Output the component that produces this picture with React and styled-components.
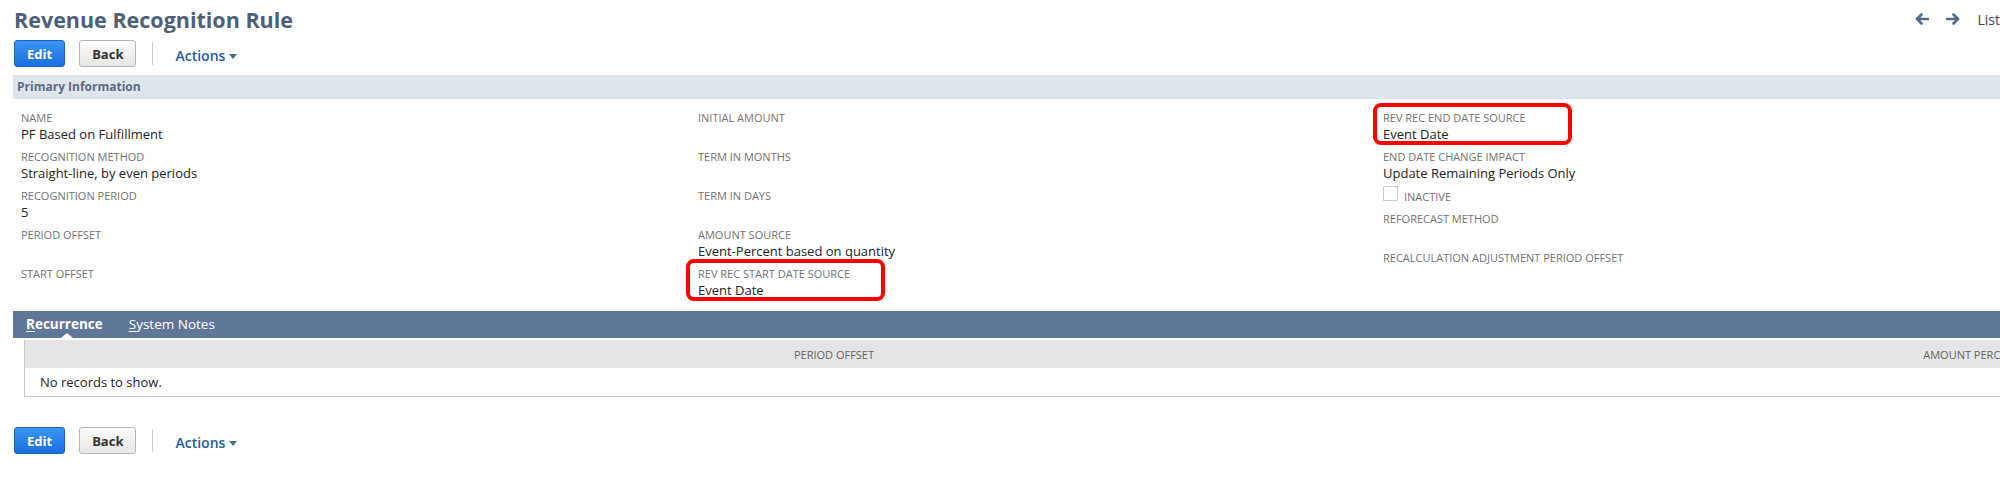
import React from "react";
import styled, { createGlobalStyle } from "styled-components";

const GlobalStyle = createGlobalStyle`
  html, body {
    margin: 0;
    padding: 0;
    background: #fff;
    overflow: hidden;
  }
  body {
    font-family: "Open Sans", "Liberation Sans", sans-serif;
    color: #262626;
  }
`;

const Page = styled.div`
  width: 2000px;
  padding-left: 13px;
  box-sizing: border-box;
`;

const Header = styled.div`
  display: flex;
  align-items: center;
  justify-content: space-between;
  height: 30px;
  padding-top: 5px;
`;

const Title = styled.h1`
  margin: 0 0 0 1px;
  font-size: 21.5px;
  line-height: 30px;
  font-weight: 700;
  color: #4d5f79;
`;

const RecordNav = styled.div`
  display: flex;
  align-items: center;
  gap: 17px;
  margin-top: -2px;
`;

const NavLink = styled.span`
  font-size: 14px;
  color: #444;
`;

const ButtonBar = styled.div`
  display: flex;
  align-items: center;
  margin-top: ${(p) => p.$top || 0}px;
  padding-left: 1px;
`;

const Button = styled.button`
  height: 27px;
  padding: 0 12px;
  margin-right: ${(p) => (p.$primary ? 14 : 16)}px;
  border-radius: 3px;
  font-family: "Open Sans", "Liberation Sans", sans-serif;
  font-size: 13px;
  font-weight: 700;
  cursor: pointer;
  border: 1px solid ${(p) => (p.$primary ? "#1c63c9" : "#b5b5b5")};
  color: ${(p) => (p.$primary ? "#fff" : "#333")};
  background: ${(p) =>
    p.$primary
      ? "linear-gradient(#3a95f2, #1a6fe0)"
      : "linear-gradient(#fbfbfb, #e6e6e6)"};
`;

const Divider = styled.div`
  width: 1px;
  height: 23px;
  background: #cfcfcf;
  margin-right: 22px;
`;

const ActionsLink = styled.span`
  display: flex;
  align-items: center;
  gap: 4px;
  font-size: 14px;
  font-weight: 600;
  color: #255a9e;
  margin-top: 4px;
`;

const Caret = styled.span`
  width: 0;
  height: 0;
  border-left: 4px solid transparent;
  border-right: 4px solid transparent;
  border-top: 5px solid #4d6a8f;
  margin-top: 1px;
`;

const SectionBar = styled.div`
  height: 24px;
  line-height: 24px;
  margin-top: 8px;
  padding-left: 4px;
  background: #dfe5ed;
  font-size: 12px;
  font-weight: 700;
  color: #5b6b83;
`;

const FieldGrid = styled.div`
  display: grid;
  grid-template-columns: 677px 685px 1fr;
  padding: 11px 0 0 8px;
`;

const Column = styled.div`
  display: flex;
  flex-direction: column;
`;

const Field = styled.div`
  position: relative;
  margin-bottom: ${(p) => (p.$compact ? 1 : 6)}px;
`;

const Label = styled.div`
  font-size: 11px;
  line-height: 15px;
  color: #727272;
  text-transform: uppercase;
`;

const Value = styled.div`
  font-size: 13px;
  line-height: 18px;
  color: #222;
`;

const Highlight = styled.div`
  position: absolute;
  left: ${(p) => p.$left}px;
  top: -7px;
  width: 199px;
  height: 42px;
  box-sizing: border-box;
  border: 4px solid #f00;
  border-radius: 8px;
  pointer-events: none;
`;

const CheckRow = styled.div`
  display: flex;
  align-items: flex-end;
  gap: 6px;
  height: 17px;
  margin: 1px 0 10px;
`;

const CheckBox = styled.span`
  width: 15px;
  height: 15px;
  box-sizing: border-box;
  border: 1px solid #cccccc;
  background: #fff;
`;

const CheckLabel = styled(Label)`
  margin-bottom: -3px;
`;

const TabBar = styled.div`
  display: flex;
  align-items: center;
  gap: 26px;
  height: 27px;
  margin-top: 6px;
  padding-left: 13px;
  background: #607799;
`;

const Tab = styled.span`
  position: relative;
  font-size: 13.5px;
  line-height: 27px;
  color: #fff;
  font-weight: ${(p) => (p.$active ? 700 : 400)};

  u {
    text-decoration: underline;
    text-underline-offset: 2px;
  }
`;

const TabPointer = styled.span`
  position: absolute;
  left: 35px;
  bottom: 0;
  width: 0;
  height: 0;
  border-left: 6px solid transparent;
  border-right: 6px solid transparent;
  border-bottom: 5px solid #fff;
`;

const RecordTable = styled.table`
  width: 2276px;
  margin: 2px 0 0 11px;
  border-collapse: collapse;
  border: 1px solid #c8c8c8;
  border-top: none;
  table-layout: fixed;
`;

const HeadCell = styled.th`
  height: 28px;
  padding: 0;
  background: #e5e5e5;
  font-size: 11px;
  font-weight: 400;
  color: #666;
  text-align: center;
  width: ${(p) => p.$width}px;
`;

const BodyCell = styled.td`
  height: 28px;
  padding: 0 0 0 15px;
  font-size: 13px;
  color: #222;
`;

const ArrowIcon = ({ flip }) => (
  <svg
    width="14"
    height="12"
    viewBox="0 0 14 12"
    style={{ transform: flip ? "scaleX(-1)" : "none" }}
  >
    <path
      d="M13 6H2.5M6.5 1.5L2 6l4.5 4.5"
      fill="none"
      stroke="#4f6b90"
      strokeWidth="2.6"
      strokeLinejoin="round"
      strokeLinecap="round"
    />
  </svg>
);

const Actions = ({ top }) => (
  <ButtonBar $top={top}>
    <Button $primary>Edit</Button>
    <Button>Back</Button>
    <Divider />
    <ActionsLink>
      Actions <Caret />
    </ActionsLink>
  </ButtonBar>
);

const Info = ({ label, value, compact, mark }) => (
  <Field $compact={compact}>
    {mark !== undefined && <Highlight $left={mark} />}
    <Label>{label}</Label>
    <Value>{value || "\u00a0"}</Value>
  </Field>
);

export default function App() {
  return (
    <Page>
      <GlobalStyle />
      <Header>
        <Title>Revenue Recognition Rule</Title>
        <RecordNav>
          <ArrowIcon />
          <ArrowIcon flip />
          <NavLink>List</NavLink>
        </RecordNav>
      </Header>
      <Actions top={5} />

      <SectionBar>Primary Information</SectionBar>
      <FieldGrid>
        <Column>
          <Info label="Name" value="PF Based on Fulfillment" />
          <Info label="Recognition Method" value="Straight-line, by even periods" />
          <Info label="Recognition Period" value="5" />
          <Info label="Period Offset" />
          <Info label="Start Offset" />
        </Column>
        <Column>
          <Info label="Initial Amount" />
          <Info label="Term in Months" />
          <Info label="Term in Days" />
          <Info label="Amount Source" value="Event-Percent based on quantity" />
          <Info label="Rev Rec Start Date Source" value="Event Date" mark={-12} />
        </Column>
        <Column>
          <Info label="Rev Rec End Date Source" value="Event Date" mark={-10} />
          <Info label="End Date Change Impact" value="Update Remaining Periods Only" compact />
          <CheckRow>
            <CheckBox />
            <CheckLabel>Inactive</CheckLabel>
          </CheckRow>
          <Info label="Reforecast Method" />
          <Info label="Recalculation Adjustment Period Offset" />
        </Column>
      </FieldGrid>

      <TabBar>
        <Tab $active>
          <u>R</u>ecurrence
          <TabPointer />
        </Tab>
        <Tab>
          <u>S</u>ystem Notes
        </Tab>
      </TabBar>
      <RecordTable>
        <thead>
          <tr>
            <HeadCell $width={1618}>PERIOD OFFSET</HeadCell>
            <HeadCell $width={658}>AMOUNT PERCENT</HeadCell>
          </tr>
        </thead>
        <tbody>
          <tr>
            <BodyCell colSpan={2}>No records to show.</BodyCell>
          </tr>
        </tbody>
      </RecordTable>

      <Actions top={30} />
    </Page>
  );
}
